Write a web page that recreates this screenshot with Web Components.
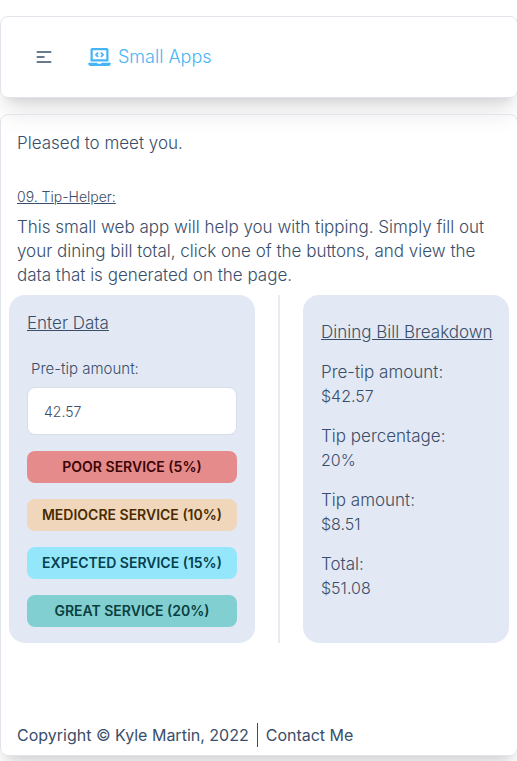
<!DOCTYPE html>
<html lang="en">
<head>
<meta charset="utf-8">
<meta name="viewport" content="width=device-width, initial-scale=1">
<title>Small Apps</title>
<style>
  html { background: #fff; }
  body {
    margin: 0;
    font: 350 17px/24px Inter, "Open Sans", sans-serif;
    color: #394e6a;
    overflow-x: hidden;
  }
</style>
</head>
<body>
<small-apps-page></small-apps-page>
<script>
const define = (name, html) => {
  const template = document.createElement('template');
  template.innerHTML = '<style>*{box-sizing:border-box}</style>' + html;
  customElements.define(name, class extends HTMLElement {
    constructor() {
      super();
      this.attachShadow({ mode: 'open' }).append(template.content.cloneNode(true));
    }
  });
};

define('app-card', `
  <style>
    :host {
      display: block;
      box-sizing: border-box;
      border: 1px solid #e2e4ec;
      border-radius: 8px;
      box-shadow: 0 20px 25px -5px rgba(0,0,0,.1), 0 8px 10px -6px rgba(0,0,0,.1);
    }
  </style>
  <slot></slot>`);

define('app-navbar', `
  <style>
    :host { display: flex; align-items: center; gap: 18px; padding: 16px 17px; }
    button {
      display: grid; place-items: center; width: 52px; height: 48px;
      padding: 0; border: 0; background: none; color: inherit;
    }
    a {
      display: flex; align-items: center; gap: 7px;
      color: #47b5f5; text-decoration: none;
      font-weight: 300; font-size: 18px; line-height: 28px;
    }
    svg { display: block; }
  </style>
  <button type="button" aria-label="Menu">
    <svg width="20" height="20" viewBox="0 0 24 24" fill="none" stroke="currentColor" stroke-width="2" stroke-linecap="round"><path d="M4 6h16M4 12h8M4 18h16"/></svg>
  </button>
  <a href="#">
    <svg width="23" height="18" viewBox="0 0 640 512" fill="currentColor" aria-hidden="true"><path d="M255.03 261.65c6.25 6.25 16.38 6.25 22.63 0l11.31-11.31c6.25-6.25 6.25-16.38 0-22.63L253.25 192l35.71-35.72c6.25-6.25 6.25-16.38 0-22.63l-11.31-11.31c-6.25-6.25-16.38-6.25-22.63 0l-58.34 58.34c-6.25 6.25-6.25 16.38 0 22.63l58.35 58.34zm96.01-11.3l11.31 11.31c6.25 6.25 16.38 6.25 22.63 0l58.34-58.34c6.25-6.25 6.25-16.38 0-22.63l-58.34-58.34c-6.25-6.25-16.38-6.25-22.63 0l-11.31 11.31c-6.25 6.25-6.25 16.38 0 22.63L386.75 192l-35.71 35.72c-6.25 6.25-6.25 16.38 0 22.63zM624 416H381.54c-.74 19.81-14.71 32-32.74 32H288c-18.69 0-33.02-17.47-32.77-32H16c-8.8 0-16 7.2-16 16v16c0 35.2 28.8 64 64 64h512c35.2 0 64-28.8 64-64v-16c0-8.8-7.2-16-16-16zM576 48c0-26.4-21.6-48-48-48H112C85.6 0 64 21.6 64 48v336h512V48zm-64 272H128V64h384v256z"/></svg>
    <span>Small Apps</span>
  </a>`);

define('app-intro', `
  <style>
    :host { display: block; padding: 8px; }
    p, h1 { margin: 0; }
    h1 { margin: 32px 0 8px; font-size: 14px; line-height: 20px; font-weight: inherit; text-decoration: underline; }
  </style>
  <p><slot name="greeting"></slot></p>
  <h1><slot name="title"></slot></h1>
  <p><slot></slot></p>`);

define('app-panel', `
  <style>
    :host { display: block; background: #e3e9f4; border-radius: 16px; min-width: 0; }
  </style>
  <slot></slot>`);

define('service-button', `
  <style>
    :host { display: block; }
    button {
      display: block; width: 100%; height: 32px; padding: 0; border: 0; border-radius: 8px;
      background: var(--tone); color: var(--ink);
      font: inherit; font-size: 14px; font-weight: 600; line-height: 20px; text-transform: uppercase; white-space: nowrap;
    }
  </style>
  <button type="button"><slot></slot></button>`);

define('tip-form', `
  <style>
    :host { display: flex; flex-direction: column; gap: 16px; padding: 16px 18px; }
    h2 { margin: 0; font-size: 17px; line-height: 24px; font-weight: inherit; text-decoration: underline; }
    .field { display: flex; flex-direction: column; }
    label { padding: 8px 4px; font-size: 15px; line-height: 20px; }
    input {
      width: 100%; height: 48px; padding: 0 16px; border: 1px solid #d8dde6; border-radius: 8px;
      background: #fff; color: inherit; font: inherit; font-size: 14px; line-height: 20px; outline: 0;
    }
    .poor { --tone: #e58b8b; --ink: #3d0404; }
    .mediocre { --tone: #f0d7bb; --ink: #4a2b00; }
    .expected { --tone: #94e7fb; --ink: #06404d; }
    .great { --tone: #81cfd1; --ink: #093f40; }
  </style>
  <h2>Enter Data</h2>
  <div class="field">
    <label for="amount">Pre-tip amount:</label>
    <input id="amount" type="text" inputmode="decimal" value="42.57">
  </div>
  <service-button class="poor">Poor Service (5%)</service-button>
  <service-button class="mediocre">Mediocre Service (10%)</service-button>
  <service-button class="expected">Expected Service (15%)</service-button>
  <service-button class="great">Great Service (20%)</service-button>`);

define('bill-breakdown', `
  <style>
    :host { display: block; padding: 25px 18px; }
    h2 { margin: 0 0 16px; font-size: 17px; line-height: 24px; font-weight: inherit; text-decoration: underline; white-space: nowrap; }
    dl { display: grid; gap: 16px; margin: 0; }
    dd { margin: 0; font-size: 16px; }
  </style>
  <h2>Dining Bill Breakdown</h2>
  <dl>
    <div><dt>Pre-tip amount:</dt><dd>$42.57</dd></div>
    <div><dt>Tip percentage:</dt><dd>20%</dd></div>
    <div><dt>Tip amount:</dt><dd>$8.51</dd></div>
    <div><dt>Total:</dt><dd>$51.08</dd></div>
  </dl>`);

define('split-view', `
  <style>
    :host { display: grid; grid-template-columns: 246fr 48px 206fr; }
    .rule { justify-self: center; width: 2px; background: #e9eaf2; }
  </style>
  <slot name="left"></slot><div class="rule"></div><slot name="right"></slot>`);

define('app-footer', `
  <style>
    :host { display: flex; gap: 8px; padding: 0 8px; font-size: 16px; font-weight: 400; }
    a { color: inherit; text-decoration: none; padding-left: 8px; border-left: 1px solid #394e6a; }
  </style>
  <span>Copyright © Kyle Martin, 2022</span>
  <a href="#">Contact Me</a>`);

define('small-apps-page', `
  <style>
    :host { display: grid; gap: 16px; padding: 16px 0 5px; margin-right: -1px; }
    .main { padding: 8px; }
    app-footer { margin-top: 80px; }
  </style>
  <app-card><app-navbar></app-navbar></app-card>
  <app-card class="main">
    <app-intro>
      <span slot="greeting">Pleased to meet you.</span>
      <span slot="title">09. Tip-Helper:</span>
      This small web app will help you with tipping. Simply fill out your dining bill total, click one of the buttons, and view the data that is generated on the page.
    </app-intro>
    <split-view>
      <app-panel slot="left"><tip-form></tip-form></app-panel>
      <app-panel slot="right"><bill-breakdown></bill-breakdown></app-panel>
    </split-view>
    <app-footer></app-footer>
  </app-card>`);
</script>
</body>
</html>
